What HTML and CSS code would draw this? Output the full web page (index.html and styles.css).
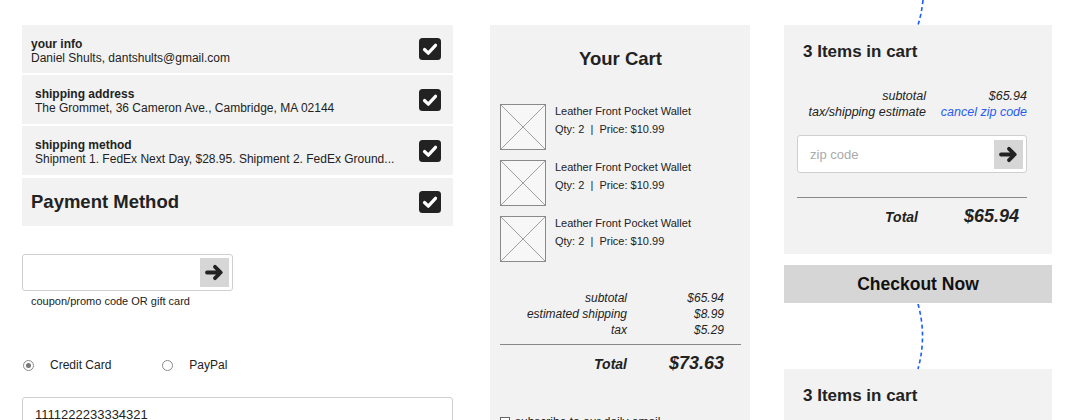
FILE: index.html
```html
<!DOCTYPE html>
<html>
<head>
<meta charset="utf-8">
<link rel="stylesheet" href="styles.css">
</head>
<body>
<div class="page">
  <div class="col-left">
    <div class="step step-a">
      <div class="step-text">
        <div class="step-title">your info</div>
        <div class="step-detail">Daniel Shults, dantshults@gmail.com</div>
      </div>
      <svg class="check" width="22" height="22" viewBox="0 0 22 22"><rect x="0" y="0" width="22" height="22" rx="3.5" fill="#222"/><path d="M5.5 11.5 L9.3 15.2 L16.5 7.3" fill="none" stroke="#fff" stroke-width="3.2" stroke-linecap="round" stroke-linejoin="round"/></svg>
    </div>
    <div class="step step-b">
      <div class="step-text">
        <div class="step-title">shipping address</div>
        <div class="step-detail">The Grommet, 36 Cameron Ave., Cambridge, MA 02144</div>
      </div>
      <svg class="check" width="22" height="22" viewBox="0 0 22 22"><rect x="0" y="0" width="22" height="22" rx="3.5" fill="#222"/><path d="M5.5 11.5 L9.3 15.2 L16.5 7.3" fill="none" stroke="#fff" stroke-width="3.2" stroke-linecap="round" stroke-linejoin="round"/></svg>
    </div>
    <div class="step step-b">
      <div class="step-text">
        <div class="step-title">shipping method</div>
        <div class="step-detail">Shipment 1. FedEx Next Day, $28.95. Shipment 2. FedEx Ground...</div>
      </div>
      <svg class="check" width="22" height="22" viewBox="0 0 22 22"><rect x="0" y="0" width="22" height="22" rx="3.5" fill="#222"/><path d="M5.5 11.5 L9.3 15.2 L16.5 7.3" fill="none" stroke="#fff" stroke-width="3.2" stroke-linecap="round" stroke-linejoin="round"/></svg>
    </div>
    <div class="step step-pay">
      <div class="pay-title">Payment Method</div>
      <svg class="check" width="22" height="22" viewBox="0 0 22 22"><rect x="0" y="0" width="22" height="22" rx="3.5" fill="#222"/><path d="M5.5 11.5 L9.3 15.2 L16.5 7.3" fill="none" stroke="#fff" stroke-width="3.2" stroke-linecap="round" stroke-linejoin="round"/></svg>
    </div>

    <div class="coupon">
      <div class="field coupon-field">
        <span class="field-text"></span>
        <span class="go"><svg width="29" height="29" viewBox="0 0 29 29"><path d="M7 14.5 H20.5 M15 8.8 L20.8 14.5 L15 20.2" fill="none" stroke="#222" stroke-width="3.8" stroke-linecap="round" stroke-linejoin="round"/></svg></span>
      </div>
      <div class="coupon-label">coupon/promo code OR gift card</div>
    </div>

    <div class="radios">
      <span class="radio on"></span><span class="radio-label">Credit Card</span>
      <span class="radio"></span><span class="radio-label">PayPal</span>
    </div>

    <div class="field card-field">
      <span class="card-num">1111222233334321</span>
    </div>
  </div>

  <div class="col-mid">
    <h2 class="cart-title">Your Cart</h2>
    <div class="items">
      <div class="item">
        <svg class="thumb" width="46" height="46" viewBox="0 0 46 46"><rect x="0.5" y="0.5" width="45" height="45" fill="#f7f7f7" stroke="#8a8a8a"/><path d="M1 1 L45 45 M45 1 L1 45" stroke="#8a8a8a" stroke-width="0.8"/></svg>
        <div class="item-text"><div>Leather Front Pocket Wallet</div><div>Qty: 2 &nbsp;|&nbsp; Price: $10.99</div></div>
      </div>
      <div class="item">
        <svg class="thumb" width="46" height="46" viewBox="0 0 46 46"><rect x="0.5" y="0.5" width="45" height="45" fill="#f7f7f7" stroke="#8a8a8a"/><path d="M1 1 L45 45 M45 1 L1 45" stroke="#8a8a8a" stroke-width="0.8"/></svg>
        <div class="item-text"><div>Leather Front Pocket Wallet</div><div>Qty: 2 &nbsp;|&nbsp; Price: $10.99</div></div>
      </div>
      <div class="item">
        <svg class="thumb" width="46" height="46" viewBox="0 0 46 46"><rect x="0.5" y="0.5" width="45" height="45" fill="#f7f7f7" stroke="#8a8a8a"/><path d="M1 1 L45 45 M45 1 L1 45" stroke="#8a8a8a" stroke-width="0.8"/></svg>
        <div class="item-text"><div>Leather Front Pocket Wallet</div><div>Qty: 2 &nbsp;|&nbsp; Price: $10.99</div></div>
      </div>
    </div>
    <div class="sum mid-sum">
      <span>subtotal</span><span>$65.94</span>
      <span>estimated shipping</span><span>$8.99</span>
      <span>tax</span><span>$5.29</span>
    </div>
    <div class="rule mid-rule"></div>
    <div class="total mid-total">
      <span class="t-label">Total</span><span class="t-value">$73.63</span>
    </div>
    <div class="subscribe"><span class="sub-box"></span><span>subscribe to our daily email</span></div>
  </div>

  <div class="col-right">
    <div class="panel">
      <h3 class="items-title">3 Items in cart</h3>
      <div class="sum right-sum">
        <span>subtotal</span><span>$65.94</span>
        <span>tax/shipping estimate</span><span class="link">cancel zip code</span>
      </div>
      <div class="field zip-field">
        <span class="placeholder">zip code</span>
        <span class="go"><svg width="29" height="29" viewBox="0 0 29 29"><path d="M7 14.5 H20.5 M15 8.8 L20.8 14.5 L15 20.2" fill="none" stroke="#222" stroke-width="3.8" stroke-linecap="round" stroke-linejoin="round"/></svg></span>
      </div>
      <div class="rule right-rule"></div>
      <div class="total right-total">
        <span class="t-label">Total</span><span class="t-value">$65.94</span>
      </div>
    </div>
    <div class="checkout">Checkout Now</div>
    <div class="panel panel-2">
      <h3 class="items-title">3 Items in cart</h3>
    </div>
  </div>

  <svg class="connector conn-top" width="20" height="26" viewBox="0 0 20 26"><path d="M13 0 Q11.5 14 8 25" fill="none" stroke="#1a5cff" stroke-width="1.6" stroke-dasharray="4 3"/></svg>
  <svg class="connector conn-mid" width="20" height="66" viewBox="0 0 20 66"><path d="M8 0 Q17 32 8 65" fill="none" stroke="#1a5cff" stroke-width="1.6" stroke-dasharray="4 3"/></svg>
</div>
</body>
</html>
```

FILE: styles.css
```css
* { box-sizing: border-box; }
html, body { margin: 0; padding: 0; background: #fff; }
body {
  font-family: "Liberation Sans", Arial, sans-serif;
  color: #222;
  width: 1082px;
  height: 420px;
  overflow: hidden;
}
.page {
  position: relative;
  display: flex;
  align-items: flex-start;
  padding: 25px 0 0 22px;
  height: 420px;
}

/* left column */
.col-left { width: 431px; display: flex; flex-direction: column; }
.step {
  background: #f2f2f2;
  display: flex;
  align-items: center;
  justify-content: space-between;
  padding: 0 12px 0 9px;
  margin-bottom: 2px;
}
.step-a { height: 48px; padding-top: 3px; }
.step-b { height: 49px; padding-left: 13px; padding-top: 2px; }
.step-a .check { margin-top: -3px; }
.step-b .check { margin-top: -2px; }
.step-pay { height: 48px; margin-top: 1px; margin-bottom: 0; }
.step-text { font-size: 12px; line-height: 14px; }
.step-title { font-weight: bold; }
.pay-title { font-size: 18.5px; font-weight: bold; }
.check { display: block; flex: none; }

.field {
  background: #fff;
  border: 1px solid #cfcfcf;
  border-radius: 3px;
  display: flex;
  align-items: center;
  justify-content: space-between;
}
.go {
  width: 29px; height: 29px;
  background: #d6d6d6;
  display: block;
}
.go svg { display: block; }
.coupon { margin-top: 28px; }
.coupon-field { width: 211px; height: 37px; padding: 0 3px 0 10px; }
.coupon-label { font-size: 11px; margin: 4px 0 0 9px; line-height: 13px; }

.radios {
  margin-top: 50px;
  display: flex;
  align-items: center;
  font-size: 12px;
  height: 14px;
}
.radio {
  width: 11px; height: 11px;
  border: 1px solid #8a8a8a;
  border-radius: 50%;
  margin-left: 1px;
  display: inline-block;
  position: relative;
  background: #fff;
}
.radio.on::after {
  content: "";
  position: absolute;
  left: 2px; top: 2px;
  width: 5px; height: 5px;
  border-radius: 50%;
  background: #777;
}
.radio-label { margin-left: 16px; margin-right: 50px; }
.radio-label:last-child { margin-right: 0; }
.card-field {
  margin-top: 25px;
  height: 40px;
  align-items: flex-start;
  padding: 9px 12px;
  font-size: 13px;
}

/* middle column */
.col-mid {
  margin-left: 37px;
  width: 260px;
  height: 395px;
  background: #f2f2f2;
  padding: 0 9px 0 10px;
}
.cart-title {
  margin: 0;
  padding-top: 24px;
  font-size: 18.5px;
  line-height: 20px;
  text-align: center;
  font-weight: bold;
}
.items { margin-top: 35px; display: flex; flex-direction: column; gap: 10px; }
.item { display: flex; align-items: flex-start; }
.thumb { display: block; flex: none; }
.item-text { font-size: 11px; line-height: 18px; margin-left: 9px; margin-top: -2px; }

.sum {
  display: grid;
  font-style: italic;
  font-size: 12px;
  line-height: 16px;
  text-align: right;
}
.mid-sum { grid-template-columns: 127px 97px; margin-top: 28px; }
.rule { height: 1px; background: #888; }
.mid-rule { margin-top: 6px; }
.total {
  display: grid;
  text-align: right;
  font-style: italic;
  font-weight: bold;
  align-items: baseline;
}
.t-label { font-size: 14px; }
.t-value { font-size: 18px; }
.mid-total { grid-template-columns: 127px 97px; margin-top: 7px; line-height: 22px; }
.subscribe {
  margin-top: 40px;
  font-size: 12px;
  line-height: 14px;
  display: flex;
  align-items: center;
  gap: 5px;
}
.sub-box { width: 10px; height: 10px; border: 1px solid #666; background: #fff; display: inline-block; }

/* right column */
.col-right { margin-left: 34px; width: 268px; }
.panel { background: #f2f2f2; height: 229px; padding: 0 25px 0 13px; }
.items-title {
  margin: 0;
  padding-top: 18px;
  padding-left: 6px;
  font-size: 17px;
  line-height: 18px;
  font-weight: bold;
}
.right-sum { grid-template-columns: 129px 101px; margin-top: 27px; font-size: 12.5px; }
.link { color: #2a5cf0; }
.zip-field { margin-top: 15px; height: 38px; padding: 0 3px 0 12px; font-size: 13px; }
.placeholder { color: #aaa; }
.right-rule { margin-top: 24px; }
.right-total { grid-template-columns: 121px 101px; margin-top: 7px; line-height: 22px; }
.checkout {
  margin-top: 11px;
  height: 38px;
  background: #d6d6d6;
  font-size: 17.5px;
  font-weight: bold;
  display: flex;
  align-items: center;
  justify-content: center;
  color: #111;
}
.panel-2 { margin-top: 66px; height: 60px; }

/* connectors */
.connector { position: absolute; display: block; }
.conn-top { left: 910px; top: 0; }
.conn-mid { left: 910px; top: 304px; }
```
